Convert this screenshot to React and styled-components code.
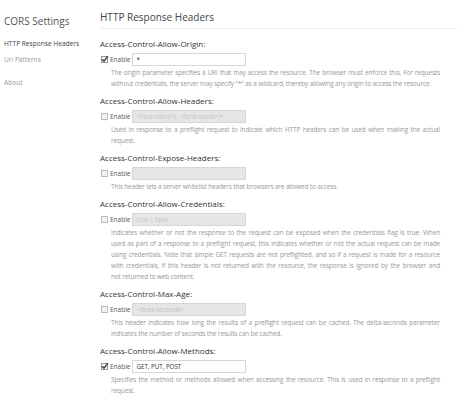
import React from "react";
import styled, { createGlobalStyle } from "styled-components";

const Global = createGlobalStyle`
  html, body { margin: 0; padding: 0; background: #fff; }
  body { font-family: "Open Sans", "Noto Sans", sans-serif; color: #333; }
`;

const Page = styled.div`
  display: flex;
  width: 457px;
  height: 400px;
  overflow: hidden;
`;

const Sidebar = styled.nav`
  width: 96px;
  flex: none;
  padding: 14px 0 0 4px;
`;

const SideTitle = styled.div`
  font-size: 10px;
  line-height: 14px;
  color: #555;
  margin-bottom: 10.5px;
`;

const SideLink = styled.div`
  font-size: 6.6px;
  line-height: 10px;
  color: ${(p) => (p.$active ? "#444" : "#999")};
  margin-bottom: ${(p) => p.$gap || 0}px;
`;

const Main = styled.main`
  flex: 1;
  min-width: 0;
`;

const Header = styled.div`
  height: 29px;
  border-bottom: 1px solid #eee;
  box-sizing: border-box;
  padding-top: 9px;
`;

const Title = styled.h1`
  margin: 0;
  font-weight: 400;
  font-size: 10px;
  line-height: 16px;
  color: #444;
`;

const Sections = styled.div`
  padding-top: 7px;
`;

const Section = styled.section`
  padding-right: 17px;
  margin-bottom: 4px;
`;

const Label = styled.div`
  font-size: 8px;
  line-height: 16px;
  height: 16px;
  color: #333;
`;

const Row = styled.div`
  display: flex;
  align-items: center;
  height: 15px;
`;

const Box = styled.span`
  width: 5px;
  height: 5px;
  border: 1px solid ${(p) => (p.$checked ? "#999" : "#bbb")};
  background: ${(p) => (p.$checked ? "#fff" : "#f0f0f0")};
  margin: 0 2px 0 1px;
  display: flex;
  align-items: center;
  justify-content: center;
  position: relative;
`;

const EnableText = styled.span`
  font-size: 6.5px;
  color: #555;
  margin-right: 2px;
`;

const Input = styled.div`
  width: 109px;
  height: 11px;
  border: 1px solid #d6d6d6;
  background: ${(p) => (p.$disabled ? "#e6e6e6" : "#fff")};
  color: ${(p) => (p.$disabled ? "#c4c4c4" : "#333")};
  font-size: 6.2px;
  line-height: 11px;
  padding-left: 3px;
  white-space: nowrap;
  overflow: hidden;
`;

const Desc = styled.div`
  padding-left: 11px;
  font-size: 6.5px;
  letter-spacing: -0.15px;
  line-height: 11px;
  color: #999;
`;

const Line = styled.div`
  text-align: ${(p) => (p.$last ? "left" : "justify")};
  text-align-last: ${(p) => (p.$last ? "left" : "justify")};
`;

const CheckMark = styled.svg`
  position: absolute;
  left: -1px;
  top: -2px;
`;

const Check = () => (
  <CheckMark width="8" height="8" viewBox="0 0 8 8">
    <path d="M1.2 4.2 L3 6.2 L6.8 1.2" fill="none" stroke="#333" strokeWidth="1.3" />
  </CheckMark>
);

const sections = [
  {
    name: "Access-Control-Allow-Origin:",
    checked: true,
    value: "*",
    lines: [
      "The origin parameter specifies a URI that may access the resource. The browser must enforce this. For requests",
      "without credentials, the server may specify \"*\" as a wildcard, thereby allowing any origin to access the resource.",
    ],
  },
  {
    name: "Access-Control-Allow-Headers:",
    placeholder: "<field-name>[, <field-name>]*",
    lines: [
      "Used in response to a preflight request to indicate which HTTP headers can be used when making the actual",
      "request.",
    ],
  },
  {
    name: "Access-Control-Expose-Headers:",
    placeholder: "",
    lines: ["This header lets a server whitelist headers that browsers are allowed to access."],
  },
  {
    name: "Access-Control-Allow-Credentials:",
    placeholder: "true | false",
    lines: [
      "Indicates whether or not the response to the request can be exposed when the credentials flag is true. When",
      "used as part of a response to a preflight request, this indicates whether or not the actual request can be made",
      "using credentials. Note that simple GET requests are not preflighted, and so if a request is made for a resource",
      "with credentials, if this header is not returned with the resource, the response is ignored by the browser and",
      "not returned to web content.",
    ],
  },
  {
    name: "Access-Control-Max-Age:",
    placeholder: "<delta-seconds>",
    lines: [
      "This header indicates how long the results of a preflight request can be cached. The delta-seconds parameter",
      "indicates the number of seconds the results can be cached.",
    ],
  },
  {
    name: "Access-Control-Allow-Methods:",
    checked: true,
    value: "GET, PUT, POST",
    lines: [
      "Specifies the method or methods allowed when accessing the resource. This is used in response to a preflight",
      "request.",
    ],
  },
];

export default function App() {
  return (
    <>
      <Global />
      <Page>
        <Sidebar>
          <SideTitle>CORS Settings</SideTitle>
          <SideLink $active $gap={6}>HTTP Response Headers</SideLink>
          <SideLink $gap={13}>Uri Patterns</SideLink>
          <SideLink>About</SideLink>
        </Sidebar>
        <Main>
          <Header>
            <Title>HTTP Response Headers</Title>
          </Header>
          <Sections>
            {sections.map((s) => (
              <Section key={s.name}>
                <Label>{s.name}</Label>
                <Row>
                  <Box $checked={s.checked}>{s.checked && <Check />}</Box>
                  <EnableText>Enable</EnableText>
                  <Input $disabled={!s.checked}>{s.checked ? s.value : s.placeholder}</Input>
                </Row>
                <Desc>
                  {s.lines.map((l, j) => (
                    <Line key={j} $last={j === s.lines.length - 1}>{l}</Line>
                  ))}
                </Desc>
              </Section>
            ))}
          </Sections>
        </Main>
      </Page>
    </>
  );
}
